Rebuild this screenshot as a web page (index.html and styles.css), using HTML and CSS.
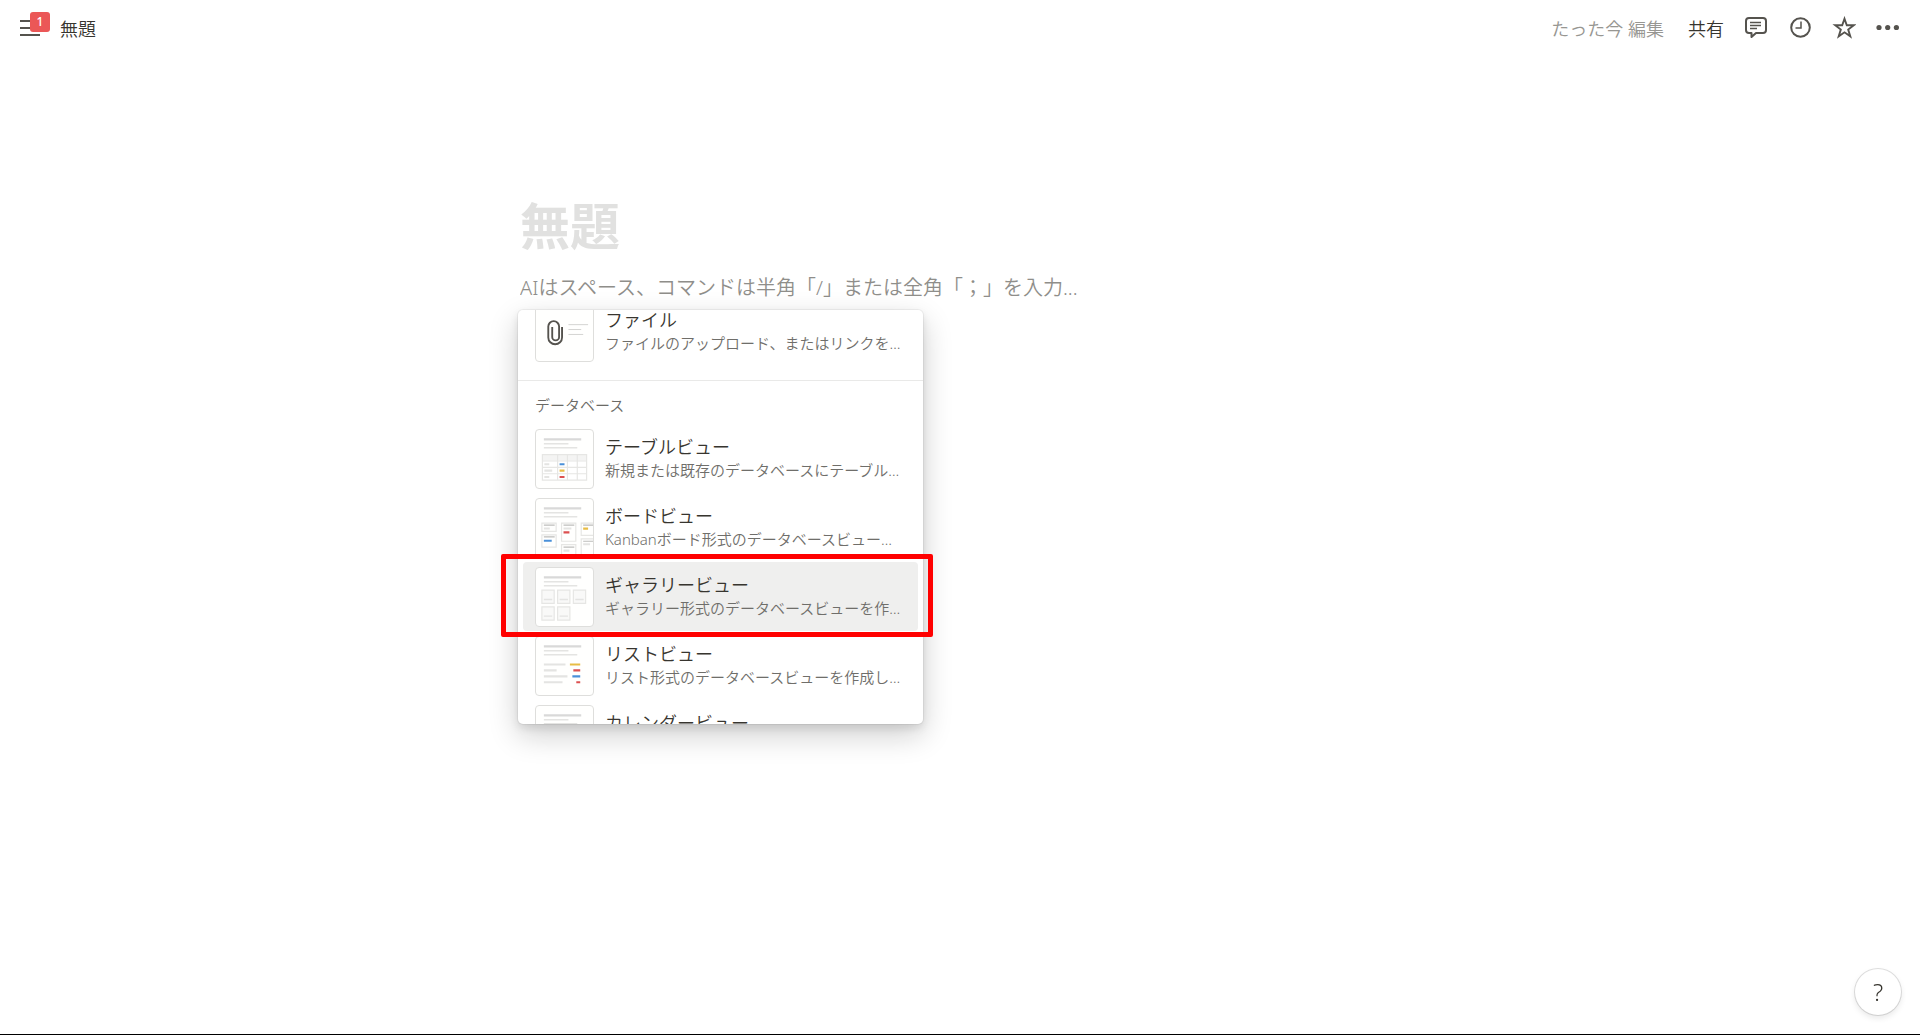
FILE: index.html
```html
<!DOCTYPE html>
<html lang="ja">
<head>
    <meta charset="UTF-8">
    <meta name="viewport" content="width=device-width, initial-scale=1.0">
    <title>無題</title>
    <link rel="stylesheet" href="styles.css">
</head>
<body>
    <header class="topbar">
        <button class="menu-button" aria-label="サイドバーを開く">
            <svg width="20" height="18" viewBox="0 0 20 18"><path d="M0 2h20M0 9h20M0 16h20" stroke="#55534e" stroke-width="2"/></svg>
            <span class="badge">1</span>
        </button>
        <a class="crumb" href="#">無題</a>
        <div class="actions">
            <span class="edited">たった今 編集</span>
            <button class="share">共有</button>
            <button class="icon-button" aria-label="コメント">
                <svg width="24" height="24" viewBox="0 0 24 24" fill="none" stroke="#55534e" stroke-width="2" stroke-linejoin="round"><path d="M5 2h14a3 3 0 0 1 3 3v9a3 3 0 0 1-3 3h-7l-4.500 4V17H5a3 3 0 0 1-3-3V5a3 3 0 0 1 3-3z"/><path d="M6 6.500h11M6 9.500h11M6 12.500h7" stroke-width="1.300"/></svg>
            </button>
            <button class="icon-button" aria-label="更新履歴">
                <svg width="24" height="24" viewBox="0 0 24 24" fill="none" stroke="#55534e" stroke-width="2"><circle cx="12.500" cy="11.500" r="9.300"/><path d="M13 5.500v6.500H7.500" stroke-width="1.500"/></svg>
            </button>
            <button class="icon-button" aria-label="お気に入り">
                <svg width="24" height="24" viewBox="0 0 24 24" fill="none" stroke="#55534e" stroke-width="1.900"><path d="M12.500 2.700l2.300 6.500h7l-5.600 4.300 2.100 6.900-5.800-4.100-5.800 4.100 2.100-6.900-5.600-4.300h7z"/></svg>
            </button>
            <button class="icon-button" aria-label="その他">
                <svg width="24" height="24" viewBox="0 0 24 24" fill="#55534e"><circle cx="3" cy="11.500" r="2.600"/><circle cx="11.700" cy="11.500" r="2.600"/><circle cx="20.400" cy="11.500" r="2.600"/></svg>
            </button>
        </div>
    </header>

    <main class="page">
        <input class="title" type="text" aria-label="タイトル" placeholder="無題">
        <input class="block" type="text" aria-label="本文" placeholder="AIはスペース、コマンドは半角「/」または全角「；」を入力...">

        <div class="popup">
            <div class="menu">
                <div class="menu-scroll">
                    <button class="item">
                        <svg class="thumb" viewBox="0 0 58 58" fill="none">
                            <path d="M26.500 24v10.500a7 7 0 0 1-14 0V23.500a5.500 5.500 0 0 1 11 0V34a3.500 3.500 0 0 1-7 0V24" stroke="#55534e" stroke-width="1.900"/>
                            <path d="M33 21.500h20M33 26.500h13M33 31.500h15" stroke="#d3d3d1"/>
                        </svg>
                        <span class="text"><span class="name">ファイル</span><span class="desc">ファイルのアップロード、またはリンクを…</span></span>
                    </button>
                    <h2 class="section">データベース</h2>
                    <button class="item">
                        <svg class="thumb" viewBox="0 0 58 58">
                            <path class="line-strong" d="M8 9h38"/><path class="line" d="M8 13.500h25M8 17.500h34"/>
                            <path d="M6.500 24.500h45v26h-45z" fill="#fff"/><path d="M6.500 24.500h45v6h-45z" fill="#f4f4f3"/>
                            <path class="frame" d="M6.500 24.500h45v26h-45zM6.500 31h45M6.500 37.500h45M6.500 44h45M22 24.500v26M32 24.500v26M42 24.500v26"/>
                            <path class="stub" d="M8.500 34.300h5M8.500 40.800h8M8.500 47.300h5"/>
                            <path class="stub blue" d="M24 34.300h5"/><path class="stub yellow" d="M24 40.800h5"/><path class="stub red" d="M24 47.300h5"/>
                        </svg>
                        <span class="text"><span class="name">テーブルビュー</span><span class="desc">新規または既存のデータベースにテーブル…</span></span>
                    </button>
                    <button class="item">
                        <svg class="thumb" viewBox="0 0 58 58">
                            <path class="line-strong" d="M8 9h38"/><path class="line" d="M8 13.500h25M8 17.500h34"/>
                            <path class="frame" d="M6 24h14.500v8.500H6zM6 36h14.500v12.500H6zM26 24h14.500v18.500H26zM26 46h14.500v14H26zM46 24h14.500v12.500H46zM46 40h14.500v18H46z"/>
                            <path d="M8 26h11M8 38h11M28 26h11M28 48.500h11M48 26h10M48 42.500h10" stroke="#bdbdbb" stroke-width="1.200"/>
                            <path class="stub" d="M8 29.500h6M28 29.500h8M28 52h6M48 45.500h7"/>
                            <path class="stub blue" d="M8 42h8"/><path class="stub red" d="M28 33.500h6"/><path class="stub yellow" d="M48 29.700h5"/>
                        </svg>
                        <span class="text"><span class="name">ボードビュー</span><span class="desc">Kanbanボード形式のデータベースビュー…</span></span>
                    </button>
                    <button class="item selected">
                        <svg class="thumb" viewBox="0 0 58 58">
                            <path class="line-strong" d="M8 9h38"/><path class="line" d="M8 13.500h25M8 17.500h34"/>
                            <path class="frame card" d="M6 22h12.500v13.500H6zM22 22h12.500v13.500H22zM38 22h12.500v13.500H38zM6 39h12.500v13.500H6zM22 39h12.500v13.500H22z"/>
                            <path class="line" d="M8 31.500h8.500M24 31.500h8.500M40 31.500h8.500M8 48.500h8.500M24 48.500h8.500"/>
                        </svg>
                        <span class="text"><span class="name">ギャラリービュー</span><span class="desc">ギャラリー形式のデータベースビューを作…</span></span>
                    </button>
                    <button class="item">
                        <svg class="thumb" viewBox="0 0 58 58">
                            <path class="line-strong" d="M8 9h38"/><path class="line" d="M8 13.500h25M8 17.500h34"/>
                            <path class="stub" d="M8 27.500h22M8 33.500h13M8 39.500h24M8 45.500h19"/>
                            <path class="stub yellow" d="M34.500 27.500H45"/><path class="stub red" d="M38 33.500h7M41 45.500h4"/><path class="stub blue" d="M37 39.500h8"/>
                        </svg>
                        <span class="text"><span class="name">リストビュー</span><span class="desc">リスト形式のデータベースビューを作成し…</span></span>
                    </button>
                    <button class="item">
                        <svg class="thumb" viewBox="0 0 58 58">
                            <path class="line-strong" d="M8 9h38"/><path class="line" d="M8 13.500h25M8 17.500h34"/>
                        </svg>
                        <span class="text"><span class="name">カレンダービュー</span><span class="desc">カレンダー形式のデータベースビューを作…</span></span>
                    </button>
                </div>
            </div>
            <div class="highlight"></div>
        </div>
    </main>

    <button class="help" aria-label="ヘルプ">?</button>
</body>
</html>
```

FILE: styles.css
```css
* {
    box-sizing: border-box;
}
body {
    margin: 0;
    min-height: 100vh;
    background: #fff;
    border-bottom: 1px solid #000;
    color: #37352f;
    font-family: "Noto Sans", "Noto Sans CJK JP", sans-serif;
    font-size: 18px;
    font-weight: 350;
}
button, input {
    font: inherit;
    color: inherit;
    border: 0;
    padding: 0;
    background: none;
}
button {
    cursor: pointer;
}
svg {
    display: block;
}

/* top bar */
.topbar {
    display: flex;
    align-items: center;
    height: 55px;
    padding: 0 10px 0 20px;
}
.menu-button {
    position: relative;
}
.badge {
    position: absolute;
    left: 10px;
    top: -7px;
    width: 20px;
    height: 20px;
    border-radius: 3px;
    background: #eb5757;
    color: #fff;
    font-size: 12px;
    font-weight: 500;
    line-height: 20px;
}
.crumb {
    margin-left: 20px;
    color: inherit;
    text-decoration: none;
}
.actions {
    display: flex;
    align-items: center;
    margin-left: auto;
}
.edited {
    color: #979692;
}
.share {
    padding: 0 10px 0 24px;
}
.icon-button {
    display: flex;
    justify-content: center;
    width: 44px;
}

/* page */
.page {
    max-width: 880px;
    margin: 0 auto;
    padding-top: 136px;
}
.title, .block {
    display: block;
    width: 100%;
    outline: none;
}
.title {
    height: 70px;
    font-size: 50px;
    font-weight: 700;
}
.title::placeholder {
    color: #e1e1e0;
    opacity: 1;
}
.block {
    height: 30px;
    margin: 11px 0 8px;
    font-size: 20px;
}
.block::placeholder {
    color: #8f8e8a;
    opacity: 1;
}

/* slash menu */
.popup {
    position: relative;
    width: 405px;
    margin-left: -2px;
}
.menu {
    height: 414px;
    overflow: hidden;
    border-radius: 5px;
    background: #fff;
    box-shadow: 0 0 0 1px rgba(15, 15, 15, 0.05), 0 4px 8px rgba(15, 15, 15, 0.1), 0 11px 30px rgba(15, 15, 15, 0.2);
}
.menu-scroll {
    margin-top: -13px;
    padding: 0 5px;
}
.item {
    display: flex;
    align-items: center;
    gap: 11px;
    width: 100%;
    height: 69px;
    padding: 0 12px;
    border-radius: 4px;
    text-align: left;
}
.selected {
    background: #efefee;
}
.thumb {
    flex: none;
    width: 59px;
    height: 60px;
    border: 1px solid #dededc;
    border-radius: 4px;
    background: #fffffe;
}
.text {
    min-width: 0;
}
.name, .desc {
    display: block;
    overflow: hidden;
    white-space: nowrap;
}
.name {
    line-height: 22px;
}
.desc {
    color: #6f6e6a;
    font-size: 15px;
    line-height: 24px;
}
.section {
    margin: 14px -5px 0;
    padding: 2px 17px 0;
    border-top: 1px solid #e9e9e8;
    color: #6b6a66;
    font-size: 15px;
    font-weight: 350;
    line-height: 44px;
    height: 44px;
}
.line-strong {
    stroke: #d9d9d8;
    stroke-width: 2.4;
}
.line {
    stroke: #e4e4e2;
    stroke-width: 1.4;
}
.frame {
    fill: none;
    stroke: #e6e6e4;
    stroke-width: 1.2;
}
.card {
    fill: #f9f9f8;
}
.stub {
    stroke: #e4e4e2;
    stroke-width: 2.2;
}
.blue {
    stroke: #4a90d9;
}
.yellow {
    stroke: #e8bd45;
}
.red {
    stroke: #dc5050;
}

/* frame around the gallery entry */
.highlight {
    position: absolute;
    top: 244px;
    left: -17px;
    right: -10px;
    height: 83px;
    border: 5px solid #f00;
    border-radius: 2px;
    pointer-events: none;
}

.help {
    position: fixed;
    right: 19px;
    bottom: 20px;
    width: 46px;
    height: 46px;
    border-radius: 50%;
    background: #fff;
    box-shadow: 0 0 0 1px rgba(15, 15, 15, 0.13), 0 3px 6px rgba(15, 15, 15, 0.1);
    font-size: 24px;
    line-height: 46px;
}
```
